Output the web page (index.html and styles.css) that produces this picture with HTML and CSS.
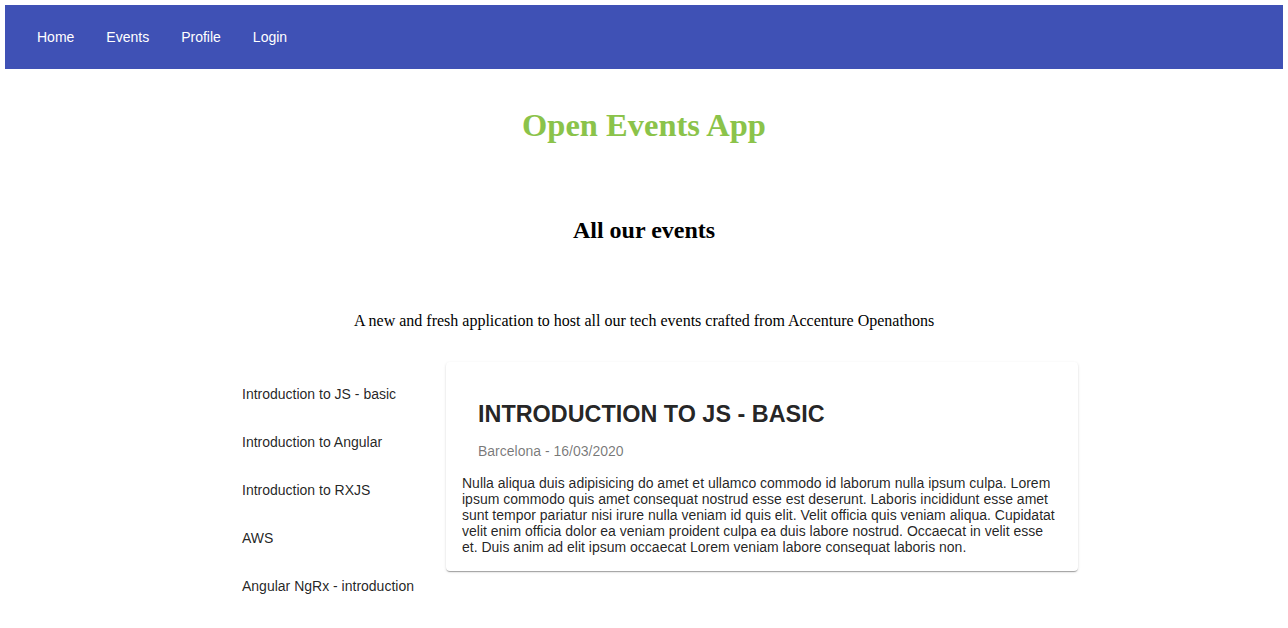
FILE: index.html
```html
<!DOCTYPE html>
<html>
<head>
<meta charset="utf-8">
<link rel="stylesheet" href="styles.css">
</head>
<body>
<nav class="toolbar">
  <a class="nav-btn">Home</a>
  <a class="nav-btn">Events</a>
  <a class="nav-btn">Profile</a>
  <a class="nav-btn">Login</a>
</nav>
<main class="main">
  <h1 class="app-title">Open Events App</h1>
  <h2 class="section-title">All our events</h2>
  <p class="intro">A new and fresh application to host all our tech events crafted from Accenture Openathons</p>
  <div class="events">
    <ul class="event-list">
      <li class="event-item">Introduction to JS - basic</li>
      <li class="event-item">Introduction to Angular</li>
      <li class="event-item">Introduction to RXJS</li>
      <li class="event-item">AWS</li>
      <li class="event-item">Angular NgRx - introduction</li>
    </ul>
    <section class="card">
      <div class="card-header">
        <div class="card-title">Introduction to JS - basic</div>
        <div class="card-subtitle">Barcelona - 16/03/2020</div>
      </div>
      <div class="card-content">Nulla aliqua duis adipisicing do amet et ullamco commodo id laborum nulla ipsum culpa. Lorem ipsum commodo quis amet consequat nostrud esse est deserunt. Laboris incididunt esse amet sunt tempor pariatur nisi irure nulla veniam id quis elit. Velit officia quis veniam aliqua. Cupidatat velit enim officia dolor ea veniam proident culpa ea duis labore nostrud. Occaecat in velit esse et. Duis anim ad elit ipsum occaecat Lorem veniam labore consequat laboris non.</div>
    </section>
  </div>
</main>
</body>
</html>
```
FILE: styles.css
```css
html, body {
  background: #fff;
}
body {
  margin: 5px;
  font-family: "Liberation Serif", "Times New Roman", serif;
  color: #000;
}
.toolbar {
  display: flex;
  align-items: center;
  height: 64px;
  padding: 0 16px;
  background: #3f51b5;
}
.nav-btn {
  padding: 0 16px;
  font-family: "Liberation Sans", Arial, sans-serif;
  font-size: 14px;
  line-height: 36px;
  color: #fff;
  cursor: pointer;
}
.main {
  display: flex;
  flex-direction: column;
  align-items: center;
}
.app-title {
  margin: 38px 0 0;
  font-size: 32.5px;
  line-height: 37px;
  font-weight: bold;
  color: #8bc34a;
}
.section-title {
  margin: 72px 0 0;
  font-size: 24px;
  line-height: 28px;
  font-weight: bold;
}
.intro {
  margin: 68px 0 0;
  font-size: 16px;
  line-height: 18px;
}
.events {
  align-self: stretch;
  display: flex;
  align-items: flex-start;
  margin-top: 32px;
  padding-left: 221px;
}
.event-list {
  list-style: none;
  margin: 0;
  padding: 8px 0 0;
  width: 220px;
  font-family: "Liberation Sans", Arial, sans-serif;
  font-size: 14px;
  color: rgba(0, 0, 0, 0.87);
}
.event-item {
  height: 48px;
  display: flex;
  align-items: center;
  padding: 0 16px;
}
.card {
  width: 600px;
  padding: 16px;
  border-radius: 4px;
  background: #fff;
  box-shadow: 0 2px 1px -1px rgba(0,0,0,.2), 0 1px 1px 0 rgba(0,0,0,.14), 0 1px 3px 0 rgba(0,0,0,.12);
  font-family: "Liberation Sans", Arial, sans-serif;
  color: rgba(0, 0, 0, 0.87);
}
.card-header {
  padding: 20px 16px 0;
}
.card-title {
  font-size: 23.4px;
  line-height: 32px;
  font-weight: bold;
  text-transform: uppercase;
}
.card-subtitle {
  margin-top: 11px;
  font-size: 14px;
  line-height: 20px;
  color: rgba(0, 0, 0, 0.54);
}
.card-content {
  margin-top: 14px;
  font-size: 14px;
  line-height: 16px;
}
```
